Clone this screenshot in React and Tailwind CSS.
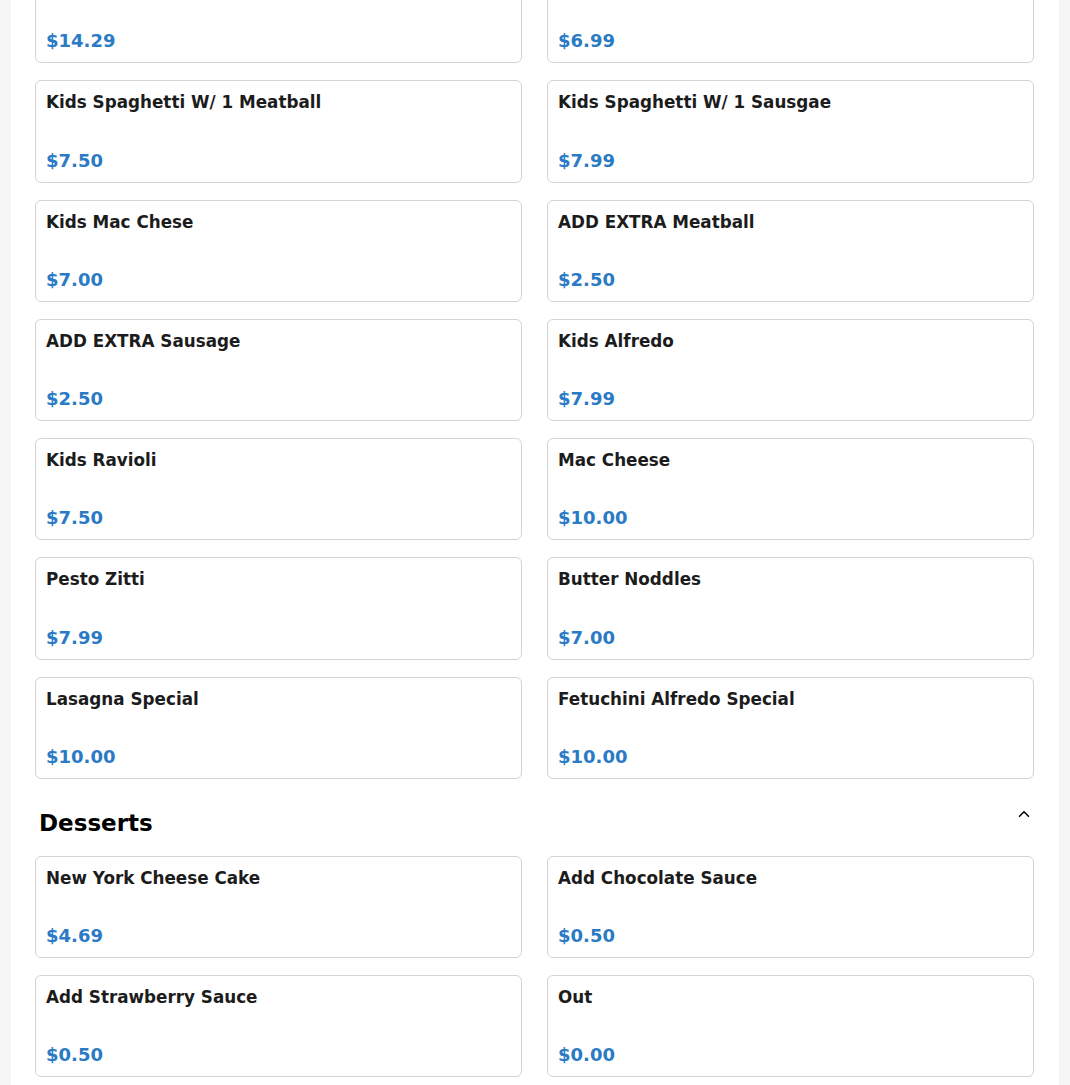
import { ChevronUp } from 'lucide-react'

const kids = [
  ['', '$14.29'],
  ['', '$6.99'],
  ['Kids Spaghetti W/ 1 Meatball', '$7.50'],
  ['Kids Spaghetti W/ 1 Sausgae', '$7.99'],
  ['Kids Mac Chese', '$7.00'],
  ['ADD EXTRA Meatball', '$2.50'],
  ['ADD EXTRA Sausage', '$2.50'],
  ['Kids Alfredo', '$7.99'],
  ['Kids Ravioli', '$7.50'],
  ['Mac Cheese', '$10.00'],
  ['Pesto Zitti', '$7.99'],
  ['Butter Noddles', '$7.00'],
  ['Lasagna Special', '$10.00'],
  ['Fetuchini Alfredo Special', '$10.00'],
]

const desserts = [
  ['New York Cheese Cake', '$4.69'],
  ['Add Chocolate Sauce', '$0.50'],
  ['Add Strawberry Sauce', '$0.50'],
  ['Out', '$0.00'],
]

function ItemCard({ name, price }) {
  return (
    <div className="h-[102.25px] rounded-md border border-[#d4d4d4] bg-white px-[10px] pt-[9px] pb-[9px] flex flex-col justify-between">
      <h3 className="text-[16.8px] font-bold text-[#1c1c1c] leading-6">{name}</h3>
      <p className="text-[18px] font-bold text-[#2a7ac6] leading-6">{price}</p>
    </div>
  )
}

export default function App() {
  return (
    <div className="min-h-screen bg-[#f6f6f6] overflow-hidden" style={{ fontFamily: '"DejaVu Sans", sans-serif' }}>
      <div className="mx-[11px] bg-white pl-[24px] pr-[25px] pb-8 h-[1085px] overflow-hidden">
        <div className="mt-[-39px] grid grid-cols-2 gap-x-[25px] gap-y-[17px]">
          {kids.map(([name, price], i) => (
            <ItemCard key={i} name={name} price={price} />
          ))}
        </div>

        <div className="flex items-center justify-between pl-[4px] pr-[1px] h-[77px]">
          <h2 className="text-[23px] font-bold text-black mt-[12px]">Desserts</h2>
          <ChevronUp size={18} strokeWidth={2} className="text-black mb-[6px]" />
        </div>

        <div className="grid grid-cols-2 gap-x-[25px] gap-y-[17px]">
          {desserts.map(([name, price], i) => (
            <ItemCard key={i} name={name} price={price} />
          ))}
        </div>
      </div>
    </div>
  )
}
